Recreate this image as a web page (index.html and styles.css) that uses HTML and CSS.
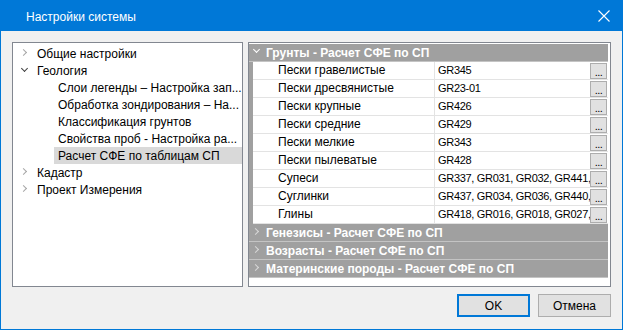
FILE: index.html
```html
<!DOCTYPE html>
<html lang="ru">

<head>
    <meta charset="utf-8">
    <title>Настройки системы</title>
    <link rel="stylesheet" href="styles.css">
</head>

<body>
    <div class="window">
        <div class="titlebar">
            <span class="title">Настройки системы</span>
            <svg class="close" width="12" height="12" viewBox="0 0 12 12">
                <path d="M0.5 0.5 L11.5 11.5 M11.5 0.5 L0.5 11.5" stroke="#fff" stroke-width="1.1" fill="none"/>
            </svg>
        </div>

        <div class="content">
            <div class="panes">
                <ul class="tree">
                    <li class="node"><span class="toggle collapsed"></span><span class="label">Общие настройки</span></li>
                    <li class="node"><span class="toggle expanded"></span><span class="label">Геология</span></li>
                    <li class="node child"><span class="label">Слои легенды – Настройка зап...</span></li>
                    <li class="node child"><span class="label">Обработка зондирования – На...</span></li>
                    <li class="node child"><span class="label">Классификация грунтов</span></li>
                    <li class="node child"><span class="label">Свойства проб - Настройка ра...</span></li>
                    <li class="node child selected"><span class="label">Расчет СФЕ по таблицам СП</span></li>
                    <li class="node"><span class="toggle collapsed"></span><span class="label">Кадастр</span></li>
                    <li class="node"><span class="toggle collapsed"></span><span class="label">Проект Измерения</span></li>
                </ul>

                <div class="grid">
                    <div class="category"><span class="toggle expanded light"></span>Грунты - Расчет СФЕ по СП</div>
                    <div class="prop"><span class="margin"></span><span class="name">Пески гравелистые</span><span class="value"><span class="text">GR345</span><span class="more">...</span></span></div>
                    <div class="prop"><span class="margin"></span><span class="name">Пески дресвянистые</span><span class="value"><span class="text">GR23-01</span><span class="more">...</span></span></div>
                    <div class="prop"><span class="margin"></span><span class="name">Пески крупные</span><span class="value"><span class="text">GR426</span><span class="more">...</span></span></div>
                    <div class="prop"><span class="margin"></span><span class="name">Пески средние</span><span class="value"><span class="text">GR429</span><span class="more">...</span></span></div>
                    <div class="prop"><span class="margin"></span><span class="name">Пески мелкие</span><span class="value"><span class="text">GR343</span><span class="more">...</span></span></div>
                    <div class="prop"><span class="margin"></span><span class="name">Пески пылеватые</span><span class="value"><span class="text">GR428</span><span class="more">...</span></span></div>
                    <div class="prop"><span class="margin"></span><span class="name">Супеси</span><span class="value"><span class="text">GR337, GR031, GR032, GR441,</span><span class="more">...</span></span></div>
                    <div class="prop"><span class="margin"></span><span class="name">Суглинки</span><span class="value"><span class="text">GR437, GR034, GR036, GR440,</span><span class="more">...</span></span></div>
                    <div class="prop"><span class="margin"></span><span class="name">Глины</span><span class="value"><span class="text">GR418, GR016, GR018, GR027,</span><span class="more">...</span></span></div>
                    <div class="category"><span class="toggle collapsed light"></span>Генезисы - Расчет СФЕ по СП</div>
                    <div class="category"><span class="toggle collapsed light"></span>Возрасты - Расчет СФЕ по СП</div>
                    <div class="category"><span class="toggle collapsed light"></span>Материнские породы - Расчет СФЕ по СП</div>
                </div>
            </div>

            <div class="actions">
                <button class="btn btn-default">OK</button>
                <button class="btn">Отмена</button>
            </div>
        </div>
    </div>
</body>

</html>
```

FILE: styles.css
```css
html {
    box-sizing: border-box;
}

*,
*:before,
*:after {
    box-sizing: inherit;
}

body {
    margin: 0;
    font-family: "Liberation Sans", Arial, sans-serif;
    font-size: 12px;
    color: #000;
    background: #fff;
}

.window {
    width: 623px;
    height: 330px;
    border: 1px solid #0078d7;
    background: #f0f0f0;
    display: flex;
    flex-direction: column;
}

.titlebar {
    height: 30px;
    background: #0078d7;
    color: #fff;
    display: flex;
    align-items: center;
    padding: 0 12px 0 25px;
}

.title {
    flex: 1;
    font-size: 12px;
    padding-top: 1px;
}

.close {
    display: block;
}

.content {
    padding: 11px 11px 0 11px;
}

.panes {
    display: flex;
    height: 245px;
    gap: 5px;
}

/* tree */

.tree {
    list-style: none;
    margin: 0;
    padding: 2px 0 0 0;
    width: 231px;
    flex: none;
    background: #fff;
    border: 1px solid #828790;
}

.node {
    height: 17px;
    display: flex;
    align-items: center;
    padding-left: 7px;
    white-space: nowrap;
}

.node .toggle {
    width: 17px;
    height: 17px;
}

.node.child {
    margin-left: 41px;
    padding-left: 4px;
}

.node.selected {
    background: #d9d9d9;
}

.toggle {
    position: relative;
    display: inline-block;
    flex: none;
}

.toggle:before {
    content: "";
    position: absolute;
    width: 5px;
    height: 5px;
    border-right: 1.5px solid #a6a6a6;
    border-bottom: 1.5px solid #a6a6a6;
}

.toggle.collapsed:before {
    left: 1px;
    top: 5px;
    transform: rotate(-45deg);
}

.toggle.expanded:before {
    left: 2px;
    top: 4px;
    transform: rotate(45deg);
    border-color: #404040;
}

/* property grid */

.grid {
    flex: 1;
    min-width: 0;
    overflow: hidden;
    background: #fff;
    border: 1px solid #828790;
    padding: 1px 2px 0 0;
}

.category {
    height: 18px;
    background: #a0a0a0;
    color: #fff;
    font-weight: bold;
    display: flex;
    align-items: center;
    border-bottom: 1px solid #c4c4c4;
    padding-left: 3px;
    white-space: nowrap;
}

.category .toggle {
    width: 14px;
    height: 17px;
}

.category .toggle.collapsed:before {
    border-color: #d8d8d8;
}

.category .toggle.expanded:before {
    border-color: #fff;
    top: 3px;
    left: 2px;
}

.prop {
    height: 18px;
    display: flex;
}

.prop .margin {
    width: 4px;
    background: #a0a0a0;
    flex: none;
}

.prop .name {
    width: 182px;
    flex: none;
    padding-left: 25px;
    line-height: 17px;
    border-bottom: 1px solid #e3e3e3;
    border-right: 1px solid #e3e3e3;
    white-space: nowrap;
}

.prop .value {
    flex: 1;
    min-width: 0;
    display: flex;
    align-items: flex-start;
    padding-left: 3px;
    border-bottom: 1px solid #e3e3e3;
}

.prop .text {
    flex: 1;
    min-width: 0;
    overflow: hidden;
    white-space: nowrap;
    font-size: 11px;
    letter-spacing: -0.3px;
    line-height: 17px;
}

.more {
    flex: none;
    width: 17px;
    height: 16px;
    margin: 1px 1px 0 0;
    background: #e1e1e1;
    border: 1px solid #adadad;
    display: flex;
    align-items: flex-end;
    justify-content: center;
    padding-bottom: 2px;
    font-size: 11px;
    line-height: 8px;
    letter-spacing: -0.5px;
    overflow: hidden;
}

/* buttons */

.actions {
    display: flex;
    justify-content: flex-end;
    gap: 8px;
    margin-top: 7px;
}

.btn {
    width: 73px;
    height: 23px;
    margin: 0;
    padding: 0;
    background: #e1e1e1;
    border: 1px solid #adadad;
    font-family: "Liberation Sans", Arial, sans-serif;
    font-size: 12px;
    color: #000;
}

.btn-default {
    border: 2px solid #0078d7;
}
```
